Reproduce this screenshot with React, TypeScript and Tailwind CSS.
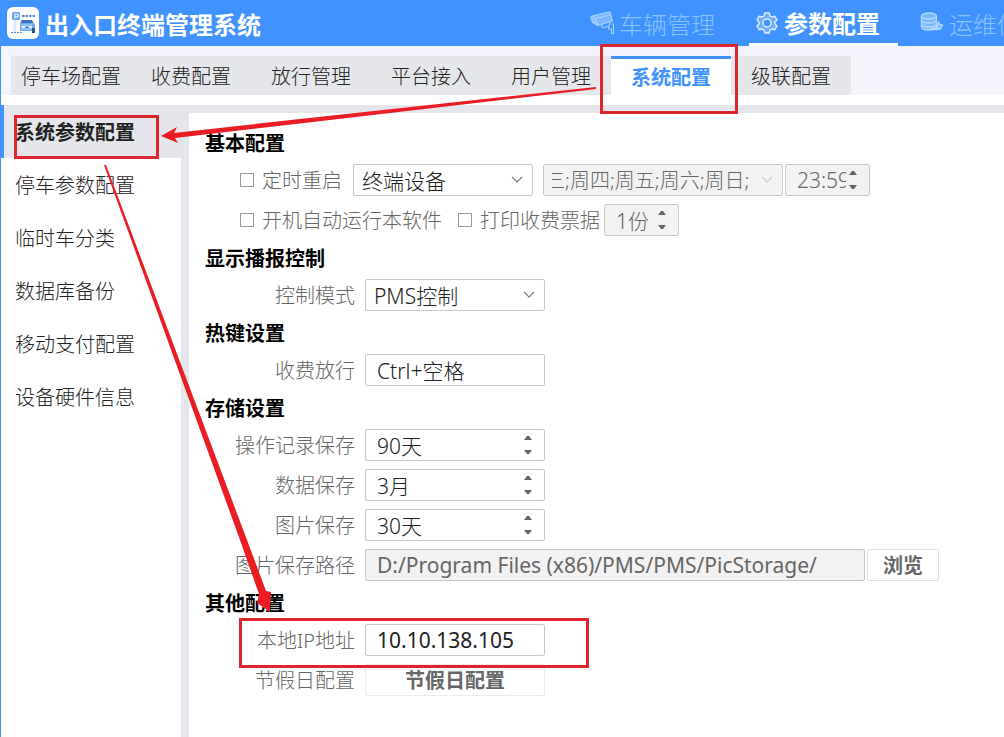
import { useState } from 'react';
import type { ReactNode } from 'react';

const SUB_TABS = ['停车场配置', '收费配置', '放行管理', '平台接入', '用户管理', '系统配置', '级联配置'];
const SIDE_ITEMS = ['系统参数配置', '停车参数配置', '临时车分类', '数据库备份', '移动支付配置', '设备硬件信息'];

function LogoIcon() {
  return (
    <svg className="w-8 h-8 shrink-0" viewBox="0 0 32 32">
      <rect width="32" height="32" rx="6" fill="#fff" />
      <path d="M8 12v13" stroke="#dbe9fb" strokeWidth="3" />
      <rect x="5" y="5" width="8" height="8" rx="1" fill="#6aa9f4" />
      <path d="M8 11.500V7h2a1.400 1.400 0 010 2.800H8" fill="none" stroke="#e6f1ff" strokeWidth="1.200" />
      <path d="M15 9h13" stroke="#5f8fc4" strokeWidth="2" strokeDasharray="2.500 1" />
      <path d="M14 13h11l3 5v7h-2l-1-1H13v-7z" fill="#6fabf0" />
      <path d="M15 13h10l1 3H14z" fill="#3f73b3" />
      <path d="M14 17h11v6H14z" fill="#8fc0f7" />
      <path d="M15 20h3M22 20h3" stroke="#fff" strokeWidth="1.500" />
      <path d="M18.500 20.500h3" stroke="#3f73b3" strokeWidth="1" />
      <path d="M25 21h3v5h-3z" fill="#2c5687" />
      <path d="M4 25.500h11" stroke="#5f8fc4" strokeWidth="1" strokeDasharray="2 1" />
    </svg>
  );
}

function CameraIcon() {
  return (
    <svg className="w-6 h-6 shrink-0" viewBox="0 0 24 24" fill="none" stroke="#a6d0ff" strokeWidth="1.100" strokeLinejoin="round">
      <path d="M4 4.500L20 .8l2.500 9.200L8 14.500z" fill="#7cb8ff" />
      <path d="M4 4.500L.8 6l1.700 5.500L8 14.500z" fill="#8fc4ff" />
      <path d="M5.500 7.500l15-3.800" />
      <path d="M11 13.800l2 3 6-1.800 1-4M18.500 15.500v2.500h3v4.500h2V13h-2.500" />
    </svg>
  );
}

function GearIcon() {
  return (
    <svg className="w-6 h-6 shrink-0" viewBox="0 0 24 24" fill="#6eadff" stroke="#dcecff" strokeWidth="1.400" strokeLinejoin="round">
      <path d="M9.800 2h4.400l.8 3 1.800 1 3-.8 2.200 3.800-2.200 2.200v1.600l2.200 2.200-2.200 3.800-3-.8-1.800 1-.8 3H9.800L9 19l-1.800-1-3 .8L2 15l2.200-2.200v-1.600L2 9l2.200-3.800 3 .8L9 5z" />
      <circle cx="12" cy="12" r="4" fill="#4093ff" />
    </svg>
  );
}

function DatabaseIcon() {
  return (
    <svg className="w-6 h-6 shrink-0" viewBox="0 0 24 24" fill="#7cb8ff" stroke="#b4d8ff" strokeWidth="1.300" strokeLinejoin="round">
      <path d="M1.500 5v11c0 4 15 4 15 0V5" />
      <ellipse cx="9" cy="5" rx="7.500" ry="3" />
      <path d="M1.500 9c0 4 15 4 15 0M1.500 13c0 4 15 4 15 0" fill="none" />
      <path d="M11 18l6-1 1.500-6 1.500 2.500 2.500.5-2 4-4.500.5z" />
    </svg>
  );
}

function Annotations() {
  return (
    <svg className="absolute left-0 top-0 pointer-events-none" width="1004" height="737" viewBox="0 0 1004 737">
      <g fill="none" stroke="#dc252c" strokeWidth="3">
        <rect x="601.500" y="45.500" width="135" height="67" />
        <rect x="15.500" y="116.500" width="142" height="41" />
        <rect x="240.500" y="619.500" width="347" height="47" />
      </g>
      <g fill="#ea1c24">
        <path d="M596 87L300 119 174 133 177 127 161 136 178 143 175 138 300 123.500 596 89z" />
        <path d="M104 165L240 540 259 594 257 603 270 612 271 592 266 591 247 540 106 165z" />
      </g>
    </svg>
  );
}

function Row({ label, htmlFor, children }: { label: string; htmlFor: string; children: ReactNode }) {
  return (
    <div className="flex items-center h-10">
      <label htmlFor={htmlFor} className="w-[150px] mr-[10px] pt-[2px] shrink-0 text-right text-[#666]">
        {label}
      </label>
      {children}
    </div>
  );
}

function Check({ id, label }: { id: string; label: string }) {
  return (
    <div className="flex items-center gap-2 text-[#666]">
      <input id={id} type="checkbox" className="appearance-none w-[14px] h-[14px] border border-[#999] bg-white checked:bg-[#4093ff]" />
      <label htmlFor={id} className="pt-[2px]">{label}</label>
    </div>
  );
}

function Select({ id, label, value, disabled, width }: { id: string; label?: string; value: string; disabled?: boolean; width: string }) {
  return (
    <div className={`relative h-8 shrink-0 ${width}`}>
      <select
        id={id}
        aria-label={label}
        disabled={disabled}
        className={`appearance-none w-full h-full pl-2 pr-7 pt-[2px] border border-[#c8c8c8] rounded-xs disabled:opacity-100 ${disabled ? 'bg-[#f2f2f2] text-[#666] -indent-[7px]' : 'bg-white text-[#222] text-[21px]'}`}
      >
        <option>{value}</option>
      </select>
      <svg className="absolute right-[10px] top-3 w-3 h-2 pointer-events-none" viewBox="0 0 12 8" fill="none" stroke={disabled ? '#ccc' : '#777'} strokeWidth="1.200">
        <path d="M1 1l5 5 5-5" />
      </svg>
    </div>
  );
}

function Spin({ id, label, value, disabled, width }: { id: string; label?: string; value: string; disabled?: boolean; width: string }) {
  return (
    <div className={`flex items-center gap-[3px] h-8 shrink-0 border border-[#c8c8c8] rounded-xs pl-[11px] pr-3 text-[21px] ${width} ${disabled ? 'bg-[#f2f2f2] text-[#666]' : 'bg-white text-[#222]'}`}>
      <input id={id} aria-label={label} defaultValue={value} disabled={disabled} className="flex-1 min-w-0 h-full" />
      <div className="flex flex-col gap-[10px] w-2 shrink-0">
        <button type="button" aria-label="增加" disabled={disabled}>
          <svg className="w-2 h-1 block" viewBox="0 0 8 4" fill="#666"><path d="M0 4l3-4h2l3 4z" /></svg>
        </button>
        <button type="button" aria-label="减少" disabled={disabled}>
          <svg className="w-2 h-1 block" viewBox="0 0 8 4" fill="#666"><path d="M0 0l3 4h2l3-4z" /></svg>
        </button>
      </div>
    </div>
  );
}

function Heading({ children }: { children: ReactNode }) {
  return <h2 className="flex items-center h-[35px] pt-[2px] font-bold text-black">{children}</h2>;
}

export default function App() {
  const [tab, setTab] = useState('系统配置');
  const [side, setSide] = useState('系统参数配置');

  return (
    <div className="relative min-h-screen flex flex-col overflow-hidden whitespace-nowrap bg-white text-xl font-light text-[#222] font-['Noto_Sans','Noto_Sans_CJK_SC',sans-serif]">
      <header className="flex h-[46px] bg-[#4093ff] text-2xl overflow-hidden">
        <div className="flex items-center gap-[6px] w-[584px] shrink-0 pl-[7px]">
          <LogoIcon />
          <h1 className="pt-[3px] font-bold text-white">出入口终端管理系统</h1>
        </div>
        <nav className="flex gap-4 shrink-0">
          <a href="#vehicle" className="flex items-center gap-[5px] w-[149px] px-[6px] shrink-0 text-[#8cc2ff]">
            <CameraIcon />
            <span className="pt-[3px]">车辆管理</span>
          </a>
          <a href="#params" className="flex items-center gap-[5px] w-[149px] px-[6px] pt-[2px] shrink-0 border-b-3 border-white font-bold text-white">
            <GearIcon />
            <span className="pt-[3px]">参数配置</span>
          </a>
          <a href="#ops" className="flex items-center gap-[5px] w-[149px] px-[6px] shrink-0 text-[#8cc2ff]">
            <DatabaseIcon />
            <span className="pt-[3px]">运维信息</span>
          </a>
        </nav>
      </header>

      <div className="flex flex-col flex-1 border-l border-[#4093ff]">
        <div className="bg-[#f4f5fc] pt-[10px] pl-[10px]">
          <div className="flex">
            {SUB_TABS.map((t) => (
              <button
                key={t}
                type="button"
                onClick={() => setTab(t)}
                className={`w-[120px] h-[39px] pt-[2px] shrink-0 ${t === tab ? 'bg-white border-t-3 border-[#4093ff] font-bold text-[#4093ff]' : 'bg-[#e6e7eb]'}`}
              >
                {t}
              </button>
            ))}
          </div>
        </div>

        <div className="flex flex-1 mt-[10px] bg-[#e5e6eb]">
          <aside className="w-[180px] shrink-0 bg-white">
            {SIDE_ITEMS.map((s) => (
              <button
                key={s}
                type="button"
                onClick={() => setSide(s)}
                className={`block w-full h-[53px] pt-[2px] text-left ${s === side ? 'bg-[#e5e6eb] border-l-3 border-[#4093ff] pl-[11px] font-bold' : 'pl-[14px]'}`}
              >
                {s}
              </button>
            ))}
          </aside>

          <main className="flex-1 min-w-0 ml-2 mt-2 pt-3 pl-4 bg-white">
            <Heading>基本配置</Heading>
            <div className="flex items-center h-10 pl-[35px]">
              <Check id="reboot" label="定时重启" />
              <div className="flex ml-[11px] gap-[10px]">
                <Select id="reboot-target" label="重启对象" value="终端设备" width="w-[180px]" />
                <div className="flex gap-[2px]">
                  <Select id="reboot-days" label="重启日期" value="三;周四;周五;周六;周日;" disabled width="w-[240px]" />
                  <Spin id="reboot-time" label="重启时间" value="23:59" disabled width="w-[85px]" />
                </div>
              </div>
            </div>
            <div className="flex items-center h-10 pl-[35px]">
              <Check id="autorun" label="开机自动运行本软件" />
              <div className="ml-4 mr-1">
                <Check id="print" label="打印收费票据" />
              </div>
              <Spin id="copies" label="打印份数" value="1份" disabled width="w-[75px]" />
            </div>

            <Heading>显示播报控制</Heading>
            <Row label="控制模式" htmlFor="mode">
              <Select id="mode" value="PMS控制" width="w-[180px]" />
            </Row>

            <Heading>热键设置</Heading>
            <Row label="收费放行" htmlFor="hotkey">
              <input id="hotkey" defaultValue="Ctrl+空格" className="w-[180px] h-8 px-[11px] border border-[#c8c8c8] rounded-xs text-[21px]" />
            </Row>

            <Heading>存储设置</Heading>
            <Row label="操作记录保存" htmlFor="log-days">
              <Spin id="log-days" value="90天" width="w-[180px]" />
            </Row>
            <Row label="数据保存" htmlFor="data-months">
              <Spin id="data-months" value="3月" width="w-[180px]" />
            </Row>
            <Row label="图片保存" htmlFor="pic-days">
              <Spin id="pic-days" value="30天" width="w-[180px]" />
            </Row>
            <Row label="图片保存路径" htmlFor="pic-path">
              <input id="pic-path" disabled defaultValue="D:/Program Files (x86)/PMS/PMS/PicStorage/" className="w-[500px] h-8 px-[11px] border border-[#c8c8c8] rounded-xs bg-[#f2f2f2] text-[21px] font-normal text-[#666]" />
              <button type="button" className="w-[72px] h-8 ml-[2px] pt-[2px] border border-[#e0e0e0] rounded-xs font-bold text-[#666]">浏览</button>
            </Row>

            <Heading>其他配置</Heading>
            <Row label="本地IP地址" htmlFor="local-ip">
              <input id="local-ip" defaultValue="10.10.138.105" className="w-[180px] h-8 px-[11px] border border-[#c8c8c8] rounded-xs text-[21px] font-normal" />
            </Row>
            <Row label="节假日配置" htmlFor="holiday">
              <button id="holiday" type="button" className="w-[180px] h-8 pt-[2px] border border-[#ebebeb] rounded-xs font-bold text-[#666]">节假日配置</button>
            </Row>
          </main>
        </div>
      </div>

      <Annotations />
    </div>
  );
}
